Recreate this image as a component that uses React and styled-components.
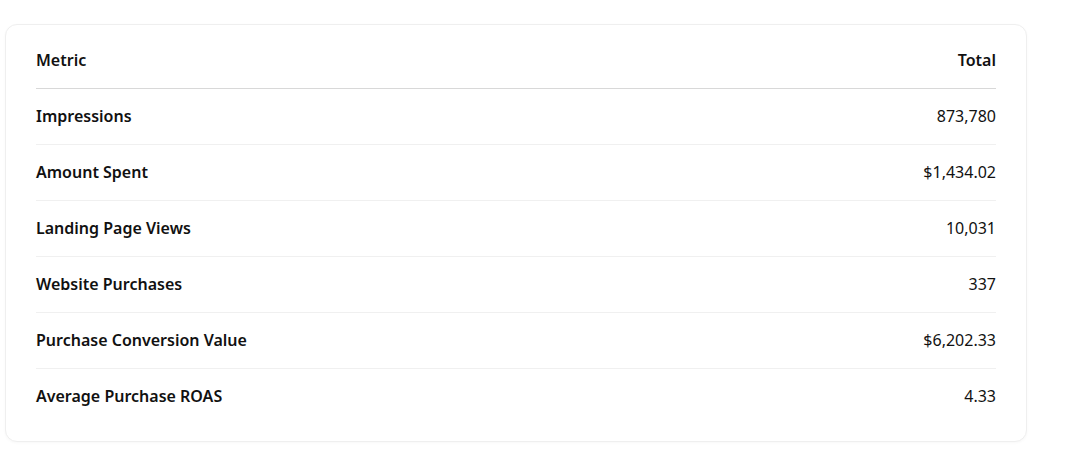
import React from "react";
import styled, { createGlobalStyle } from "styled-components";

const GlobalStyle = createGlobalStyle`
  body {
    margin: 0;
    background: #ffffff;
    font-family: "Noto Sans", "Open Sans", sans-serif;
    color: #111111;
  }
`;

const Page = styled.div`
  padding: 24px 61px 10px 5px;
`;

const Card = styled.div`
  background: #fff;
  border: 1px solid #efefef;
  border-radius: 12px;
  padding: 7px 30px 17px;
  box-shadow: 0 1px 3px rgba(0, 0, 0, 0.03);
`;

const Table = styled.table`
  width: 100%;
  border-collapse: collapse;
  font-size: 16px;
`;

const HeadCell = styled.th`
  height: 55px;
  padding: 0 0 1px;
  font-weight: 600;
  text-align: ${(p) => (p.$right ? "right" : "left")};
  border-bottom: 1px solid #d8d8d8;
`;

const Row = styled.tr`
  & + & td {
    border-top: 1px solid #f0f0f0;
  }
`;

const Cell = styled.td`
  height: 54px;
  padding: 0 0 1px;
  font-weight: ${(p) => (p.$label ? 600 : 400)};
  text-align: ${(p) => (p.$label ? "left" : "right")};
`;

const rows = [
  ["Impressions", "873,780"],
  ["Amount Spent", "$1,434.02"],
  ["Landing Page Views", "10,031"],
  ["Website Purchases", "337"],
  ["Purchase Conversion Value", "$6,202.33"],
  ["Average Purchase ROAS", "4.33"],
];

export default function App() {
  return (
    <>
      <GlobalStyle />
      <Page>
        <Card>
          <Table>
            <thead>
              <tr>
                <HeadCell>Metric</HeadCell>
                <HeadCell $right>Total</HeadCell>
              </tr>
            </thead>
            <tbody>
              {rows.map(([label, value]) => (
                <Row key={label}>
                  <Cell $label>{label}</Cell>
                  <Cell>{value}</Cell>
                </Row>
              ))}
            </tbody>
          </Table>
        </Card>
      </Page>
    </>
  );
}
